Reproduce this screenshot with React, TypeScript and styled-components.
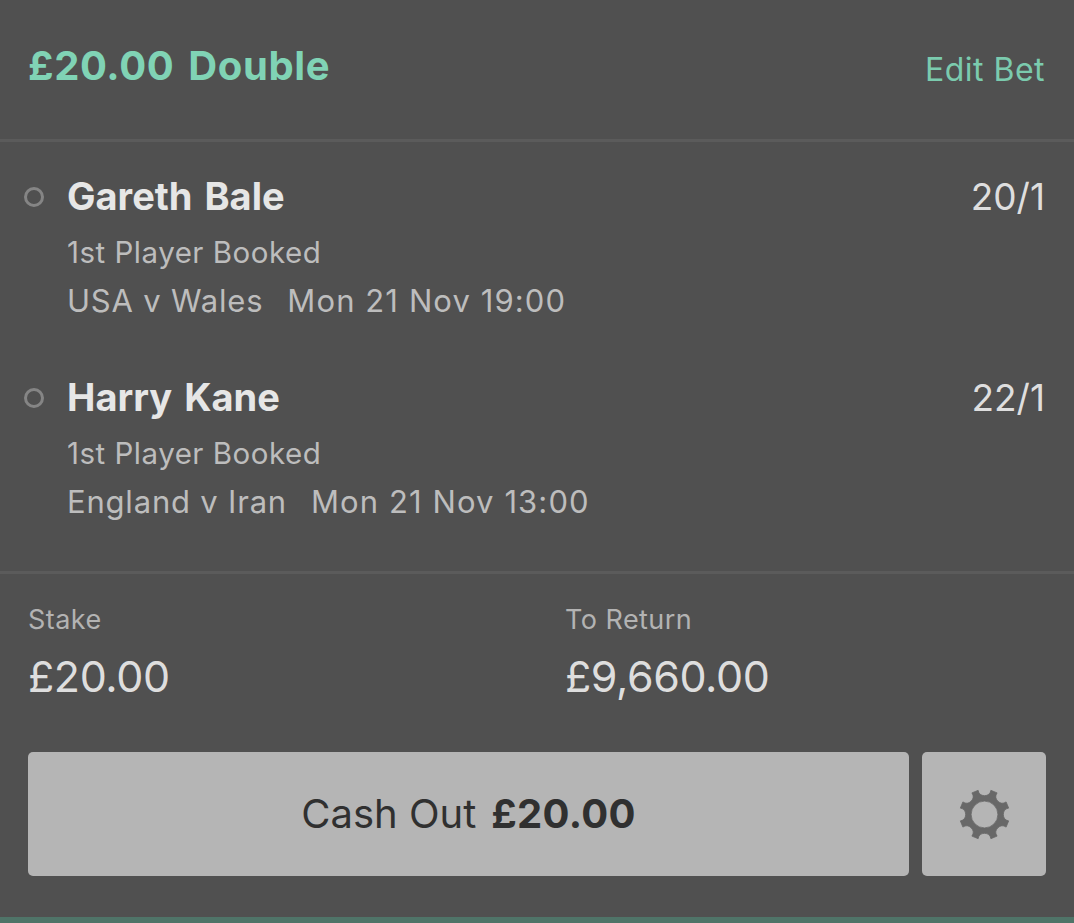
import React from 'react'
import styled, { createGlobalStyle } from 'styled-components'

const GlobalStyle = createGlobalStyle`
  * {
    box-sizing: border-box;
  }
  body {
    margin: 0;
    background: #505050;
    font-family: Inter, "Liberation Sans", sans-serif;
    -webkit-font-smoothing: antialiased;
  }
`

const Slip = styled.main`
  display: flex;
  flex-direction: column;
  height: 923px;
  overflow: hidden;
  background: #505050;
  border-bottom: 6px solid #4f7468;
`

const Header = styled.header`
  display: flex;
  justify-content: space-between;
  align-items: flex-start;
  height: 142px;
  padding: 41px 29px 0 28px;
  border-bottom: 3px solid #5b5b5b;
`

const BetTitle = styled.h1`
  margin: 0;
  font-size: 40px;
  line-height: 50px;
  font-weight: 700;
  letter-spacing: 0.6px;
  word-spacing: 4px;
  color: #80d3b5;
`

const EditBet = styled.button`
  margin: 0;
  padding: 9px 0 0;
  border: 0;
  background: none;
  font: inherit;
  font-size: 32px;
  line-height: 40px;
  letter-spacing: 0.5px;
  color: #7bcbae;
`

const Selections = styled.section`
  display: flex;
  flex-direction: column;
  height: 432px;
  padding: 29px 29px 0 24px;
  border-bottom: 3px solid #5b5b5b;
`

const Selection = styled.article`
  display: grid;
  grid-template-columns: 43px 1fr auto;
  flex: 0 0 201px;
`

const Status = styled.span`
  width: 20px;
  height: 20px;
  margin-top: 16px;
  border: 3px solid #858585;
  border-radius: 50%;
`

const Player = styled.h2`
  margin: 0;
  font-size: 38px;
  line-height: 50px;
  font-weight: 700;
  word-spacing: 3px;
  color: #e6e6e6;
`

const Market = styled.p`
  margin: 6px 0 0;
  font-size: 29.5px;
  line-height: 50px;
  letter-spacing: 0.5px;
  color: #bdbdbd;
`

const Fixture = styled.p`
  display: flex;
  gap: 24px;
  margin: -1px 0 0;
  font-size: 31px;
  line-height: 50px;
  letter-spacing: 0.8px;
  color: #bdbdbd;
`

const KickOff = styled.time`
  letter-spacing: 1.1px;
`

const Odds = styled.span`
  padding-top: 1px;
  font-size: 37px;
  line-height: 50px;
  color: #dedede;
`

const Totals = styled.dl`
  display: grid;
  grid-template-columns: 537px 1fr;
  height: 178px;
  margin: 0;
  padding: 26px 28px 0;
`

const Label = styled.dt`
  font-size: 27px;
  line-height: 40px;
  letter-spacing: 0.45px;
  color: #b3b3b3;
`

const Amount = styled.dd`
  margin: 8px 0 0;
  font-size: 43px;
  line-height: 56px;
  letter-spacing: -0.4px;
  color: #dedede;
`

const Actions = styled.div`
  display: flex;
  gap: 13px;
  padding: 0 28px;
`

const ActionButton = styled.button<{ $square?: boolean }>`
  display: flex;
  align-items: center;
  justify-content: center;
  flex: ${({ $square }) => ($square ? '0 0 124px' : '1')};
  height: 124px;
  padding: 0 0 ${({ $square }) => ($square ? 0 : 2)}px;
  border: 0;
  border-radius: 5px;
  background: #b5b5b5;
  font: inherit;
  font-size: 40px;
  color: #303030;
`

const CashValue = styled.strong`
  margin-left: 15px;
  font-weight: 700;
  letter-spacing: 0.3px;
`

const bets = [
  { player: 'Gareth Bale', market: '1st Player Booked', match: 'USA v Wales', time: 'Mon 21 Nov 19:00', odds: '20/1' },
  { player: 'Harry Kane', market: '1st Player Booked', match: 'England v Iran', time: 'Mon 21 Nov 13:00', odds: '22/1' },
]

const point = (deg: number, r: number) => {
  const a = (deg * Math.PI) / 180
  return `${(r * Math.sin(a)).toFixed(2)} ${(-r * Math.cos(a)).toFixed(2)}`
}

// eight teeth, with a round notch between each pair
const gearPath =
  `M${point(-14.8, 25)}` +
  Array.from({ length: 8 }, (_, i) => `A6.5 6.5 0 0 0 ${point(i * 45 + 14.8, 25)}L${point(i * 45 + 30.2, 25)}`).join('') +
  'ZM0 -13.4A13.4 13.4 0 1 0 0 13.4A13.4 13.4 0 1 0 0 -13.4Z'

const Gear = () => (
  <svg width="52" height="52" viewBox="-26.5 -26.5 52 52" aria-hidden="true">
    <path d={gearPath} fill="#686868" stroke="#686868" strokeWidth="0.8" strokeLinejoin="round" fillRule="evenodd" />
  </svg>
)

const App = () => {
  return (
    <>
      <GlobalStyle />
      <Slip>
        <Header>
          <BetTitle>£20.00 Double</BetTitle>
          <EditBet>Edit Bet</EditBet>
        </Header>

        <Selections>
          {bets.map((bet) => (
            <Selection key={bet.player}>
              <Status />
              <div>
                <Player>{bet.player}</Player>
                <Market>{bet.market}</Market>
                <Fixture>
                  <span>{bet.match}</span>
                  <KickOff>{bet.time}</KickOff>
                </Fixture>
              </div>
              <Odds>{bet.odds}</Odds>
            </Selection>
          ))}
        </Selections>

        <Totals>
          <div>
            <Label>Stake</Label>
            <Amount>£20.00</Amount>
          </div>
          <div>
            <Label>To Return</Label>
            <Amount>£9,660.00</Amount>
          </div>
        </Totals>

        <Actions>
          <ActionButton>
            <span>Cash Out</span>
            <CashValue>£20.00</CashValue>
          </ActionButton>
          <ActionButton $square aria-label="Cash out settings">
            <Gear />
          </ActionButton>
        </Actions>
      </Slip>
    </>
  )
}

export default App
